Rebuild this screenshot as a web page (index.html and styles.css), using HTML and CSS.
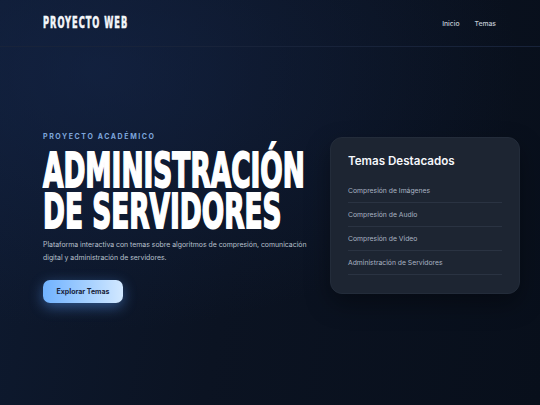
FILE: index.html
```html
<!DOCTYPE html>
<html lang="es">
<head>
<meta charset="utf-8">
<title>Proyecto Web</title>
<link rel="stylesheet" href="styles.css">
</head>
<body>
<div class="page">
  <header class="topbar">
    <div class="logo">PROYECTO WEB</div>
    <nav class="nav">
      <a href="#" class="nav-link">Inicio</a>
      <a href="#" class="nav-link">Temas</a>
    </nav>
  </header>
  <main class="hero">
    <section class="hero-text">
      <p class="eyebrow">PROYECTO ACADÉMICO</p>
      <h1 class="headline">ADMINISTRACIÓN<br>DE SERVIDORES</h1>
      <p class="lead">Plataforma interactiva con temas sobre algoritmos de compresión, comunicación digital y administración de servidores.</p>
      <a href="#" class="btn">Explorar Temas</a>
    </section>
    <aside class="card">
      <h2 class="card-title">Temas Destacados</h2>
      <ul class="topic-list">
        <li class="topic">Compresión de Imágenes</li>
        <li class="topic">Compresión de Audio</li>
        <li class="topic">Compresión de Video</li>
        <li class="topic">Administración de Servidores</li>
      </ul>
    </aside>
  </main>
</div>
</body>
</html>
```
FILE: styles.css
```css
* { box-sizing: border-box; }
html, body { margin: 0; padding: 0; }
body {
  font-family: Inter, "Noto Sans", sans-serif;
  color: #e6ebf2;
  background: #0a111d;
}
.page {
  width: 540px;
  height: 405px;
  overflow: hidden;
  background:
    radial-gradient(ellipse 420px 260px at 100px 70px, rgba(22, 40, 78, 0.55), rgba(22, 40, 78, 0) 100%),
    linear-gradient(100deg, #0e1a30 0%, #0b1322 45%, #080f1b 100%);
}
.topbar {
  height: 47px;
  display: flex;
  align-items: center;
  justify-content: space-between;
  padding: 0 44px 0 43px;
  border-bottom: 1px solid #18233a;
}
.logo {
  font-family: "DejaVu Sans", sans-serif;
  font-weight: 700;
  font-size: 15px;
  letter-spacing: 1.8px;
  color: #f4f6fa;
  transform: scaleX(0.55);
  transform-origin: left center;
  white-space: nowrap;
  -webkit-text-stroke: 0.6px #f4f6fa;
}
.nav {
  display: flex;
  gap: 15px;
}
.nav-link,
.nav-link:visited {
  font-size: 6.8px;
  font-weight: 500;
  color: #c3cad6;
  text-decoration: none;
}
.hero {
  height: 338px;
  display: flex;
  align-items: center;
  justify-content: space-between;
  padding: 0 20px 0 43px;
}
.hero-text {
  width: 280px;
  flex-shrink: 0;
  padding-top: 3px;
  display: flex;
  flex-direction: column;
  align-items: flex-start;
}
.eyebrow {
  margin: 0;
  font-size: 7px;
  font-weight: 700;
  letter-spacing: 1.6px;
  color: #7ea6dc;
  line-height: 10px;
}
.headline {
  margin: 8px 0 0;
  width: 100%;
  font-family: "DejaVu Sans", sans-serif;
  font-weight: 700;
  font-size: 48px;
  line-height: 41px;
  color: #ffffff;
  white-space: nowrap;
  transform: scaleX(0.55);
  transform-origin: left top;
  -webkit-text-stroke: 2px #ffffff;
}
.lead {
  margin: 6px 0 0;
  width: 280px;
  font-size: 6.9px;
  line-height: 13px;
  color: #b9c1cd;
}
.btn,
.btn:visited {
  margin-top: 16px;
  width: 80px;
  height: 23px;
  display: flex;
  align-items: center;
  justify-content: center;
  border-radius: 7px;
  background: linear-gradient(90deg, #70b2ff 0%, #a9d2ff 60%, #d2e8ff 100%);
  color: #17223a;
  font-size: 7px;
  font-weight: 700;
  text-decoration: none;
  box-shadow: 0 4px 14px rgba(90, 160, 255, 0.45);
}
.card {
  width: 190px;
  flex-shrink: 0;
  margin-top: -2px;
  padding: 15px 17px 18px;
  border-radius: 12px;
  background: #1d2532;
  border: 1px solid #232c3a;
  box-shadow: 0 10px 24px rgba(0, 0, 0, 0.35);
}
.card-title {
  margin: 0;
  font-size: 11.6px;
  font-weight: 600;
  line-height: 16px;
  color: #f5f7fb;
}
.topic-list {
  list-style: none;
  margin: 10px 0 0;
  padding: 0;
}
.topic {
  height: 24px;
  display: flex;
  align-items: center;
  font-size: 6.8px;
  color: #a9b3c2;
  border-bottom: 1px solid #2a3342;
}
```
